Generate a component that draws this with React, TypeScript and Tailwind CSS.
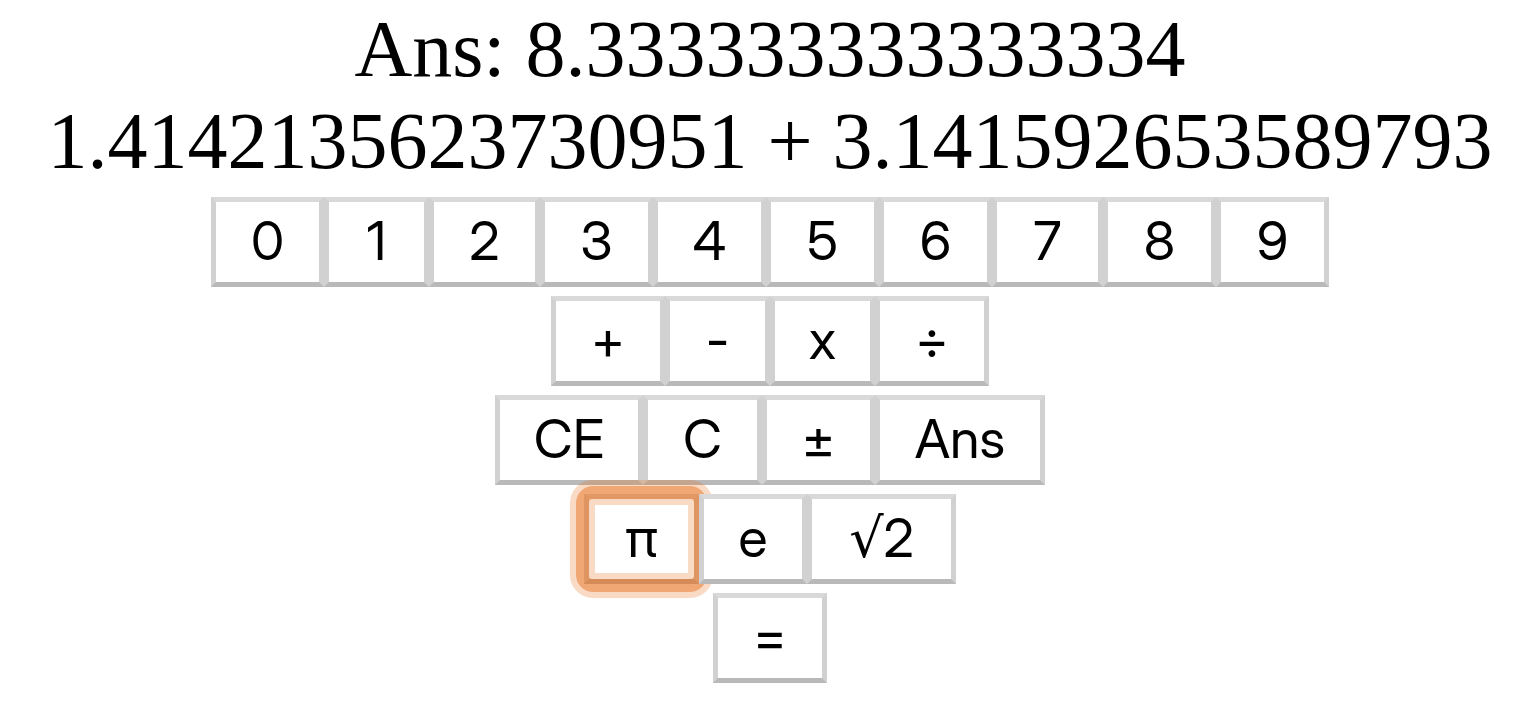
type Key = { label: string; width: string; radical?: boolean; focused?: boolean };

const NARROW = "w-[105px]";
const MEDIUM = "w-[111px]";
const REGULAR = "w-[113px]";
const OPERATOR = "w-[114px]";

const rows: Key[][] = [
  [
    { label: "0", width: REGULAR },
    { label: "1", width: NARROW },
    { label: "2", width: MEDIUM },
    { label: "3", width: REGULAR },
    { label: "4", width: REGULAR },
    { label: "5", width: REGULAR },
    { label: "6", width: REGULAR },
    { label: "7", width: MEDIUM },
    { label: "8", width: REGULAR },
    { label: "9", width: REGULAR },
  ],
  [
    { label: "+", width: OPERATOR },
    { label: "-", width: NARROW },
    { label: "x", width: NARROW },
    { label: "÷", width: OPERATOR },
  ],
  [
    { label: "CE", width: "w-[148px]" },
    { label: "C", width: "w-[119px]" },
    { label: "±", width: REGULAR },
    { label: "Ans", width: "w-[170px]" },
  ],
  [
    { label: "π", width: "w-[115px]", focused: true },
    { label: "e", width: "w-[108px]" },
    { label: "2", width: "w-[149px]", radical: true },
  ],
  [{ label: "=", width: OPERATOR }],
];

function FocusRing() {
  return (
    <span
      aria-hidden="true"
      className="pointer-events-none absolute -inset-[13px] rounded-[17px] border-[13px] border-[#e86c17]/60 shadow-[inset_0_0_0_6px_rgba(232,108,23,0.25)] outline-6 outline-[#e86c17]/25"
    />
  );
}

function CalcButton({ label, width, radical, focused }: Key) {
  return (
    <button
      type="button"
      className={`${width} relative h-[90px] shrink-0 border-5 border-x-[#d1d1d1] border-t-[#d9d9d9] border-b-[#b9b9b9] bg-white pb-[2px] text-center text-[54px] leading-[78px] whitespace-nowrap text-black outline-none`}
    >
      {radical && <span className="font-['DejaVu_Sans',sans-serif] leading-none">√</span>}
      {label}
      {focused && <FocusRing />}
    </button>
  );
}

export default function App() {
  return (
    <main className="min-h-screen bg-white pt-[3px] pl-1 text-black">
      <div className="text-center font-['Liberation_Serif',serif] text-[80px] leading-[92px] whitespace-nowrap">
        <p>Ans: 8.333333333333334</p>
        <p>1.4142135623730951 + 3.141592653589793</p>
      </div>
      <div className="mt-[10px] flex flex-col gap-[9px] font-['Inter_Display','Inter',sans-serif] [font-variation-settings:'opsz'_32]">
        {rows.map((row) => (
          <div key={row[0].label + row.length} className="flex justify-center">
            {row.map((key) => (
              <CalcButton key={key.label} {...key} />
            ))}
          </div>
        ))}
      </div>
    </main>
  );
}
